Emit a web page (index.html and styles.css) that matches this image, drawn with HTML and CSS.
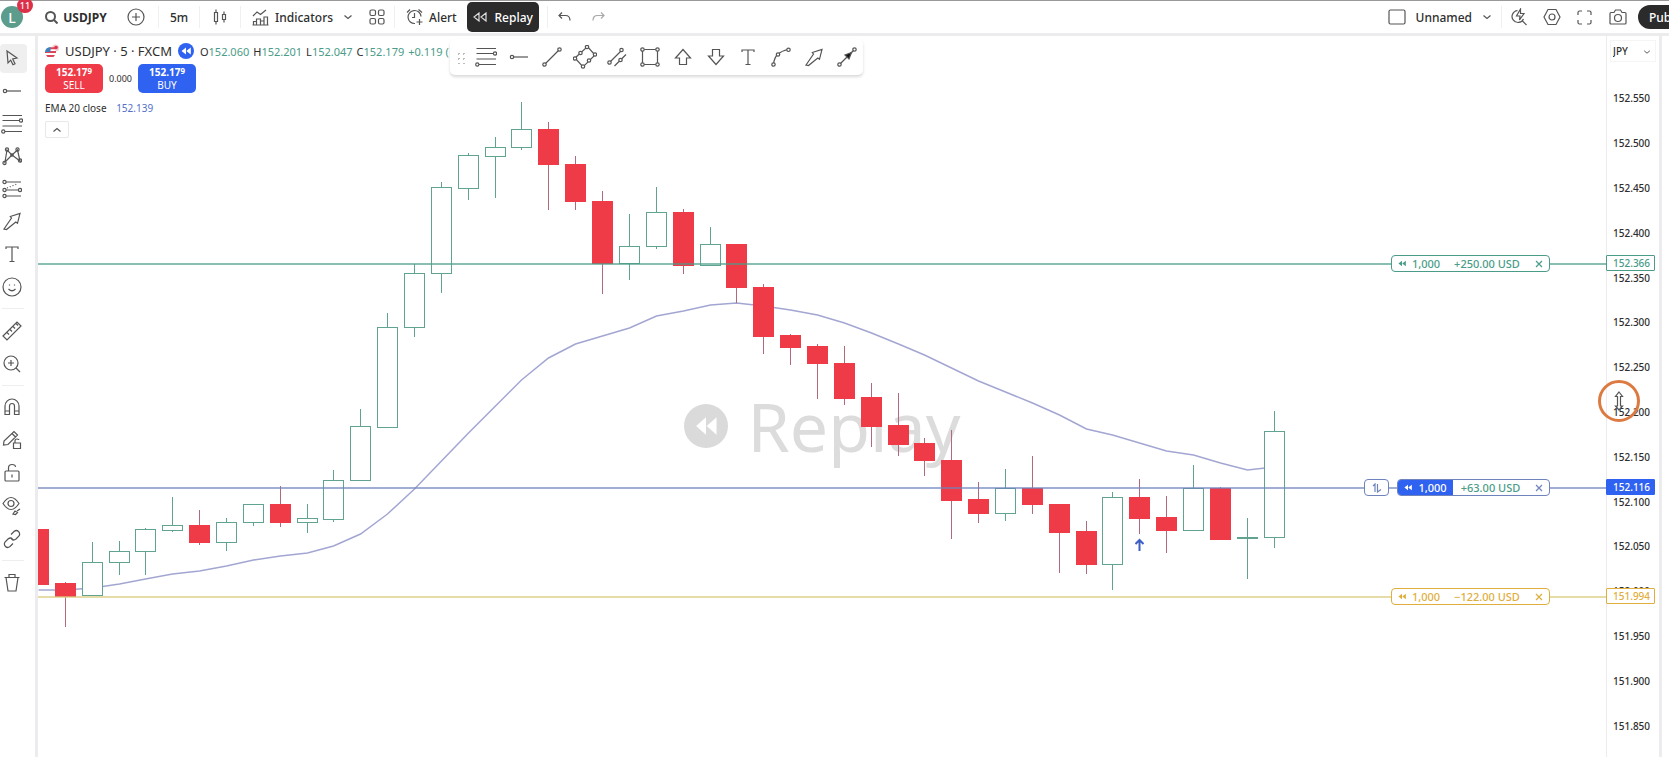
FILE: index.html
```
<!DOCTYPE html>
<html lang="en">
<head>
  <meta charset="UTF-8" />
  <meta name="viewport" content="width=device-width, initial-scale=1.0"/>
  <title>USDJPY 152.179</title>
  <link rel="stylesheet" href="styles.css">
</head>
<body>
  <!-- shared icons -->
  <svg class="defs" aria-hidden="true">
    <symbol id="i-hline" viewBox="0 0 20 20"><circle cx="3" cy="10" r="1.7"/><path d="M5 10h14"/></symbol>
    <symbol id="i-fib" viewBox="0 0 22 20"><path d="M1.500 1.500H21M1.500 6.500H18.500M1.500 12H21M4 17.500H21"/><circle cx="20" cy="6.500" r="1.600"/><circle cx="2.300" cy="17.500" r="1.600"/></symbol>
    <symbol id="i-text" viewBox="0 0 20 20"><path d="M4 5V3h12v2M10 3v14.500M7.500 17.500h5"/></symbol>
    <symbol id="i-arrow" viewBox="0 0 20 20"><path d="M2 18l7.500-11-1.200-1.500L18 2.500l-2.500 9.800-1.700-1.300L4.500 18.500z"/></symbol>
    <symbol id="i-chev" viewBox="0 0 10 10"><path d="M1.500 3.500L5 6.500l3.500-3"/></symbol>
    <symbol id="i-rew" viewBox="0 0 10 8"><path d="M5 .5v7L.5 4zM9.800 .5v7L5.300 4z"/></symbol>
    <symbol id="i-x" viewBox="0 0 8 8"><path d="M1 1l6 6M7 1L1 7"/></symbol>
  </svg>

  <header class="topbar">
    <button class="avatar" aria-label="Account">L<span class="badge">11</span></button>
    <button class="symbol-btn"><svg width="13" height="13" viewBox="0 0 13 13" class="thick"><circle cx="5.500" cy="5.500" r="4.500"/><path d="M9 9l3.500 3.500"/></svg>USDJPY</button>
    <button class="w44" aria-label="Compare"><svg width="18" height="18" viewBox="0 0 18 18"><circle cx="9" cy="9" r="8"/><path d="M9 5v8M5 9h8"/></svg></button>
    <i class="sep"></i>
    <button class="w40">5m</button>
    <i class="sep"></i>
    <button class="w40" aria-label="Chart type"><svg width="14" height="18" viewBox="0 0 14 18"><path d="M1.500 4.500h3v9h-3zM3 1.500v3M3 13.500v3M9.500 6.500h3v5h-3zM11 3.500v3M11 11.500v3"/></svg></button>
    <i class="sep"></i>
    <button class="labelled"><svg width="17" height="17" viewBox="0 0 17 17"><path d="M1 7l4-4 3.500 2.500L14 1M1.500 16v-3.500h3V16M4.500 16v-6h4v6M8.500 16v-4h3.500v4M12 16V8h3.500v8M.5 16h16"/></svg>Indicators</button>
    <button class="w24" aria-label="Favorite indicators"><svg width="10" height="10"><use href="#i-chev"/></svg></button>
    <button class="w34" aria-label="Templates"><svg width="16" height="16" viewBox="0 0 16 16"><rect x="1" y="1" width="5.500" height="5.500" rx="1.500"/><rect x="9.500" y="1" width="5.500" height="5.500" rx="1.500"/><rect x="1" y="9.500" width="5.500" height="5.500" rx="1.500"/><rect x="9.500" y="9.500" width="5.500" height="5.500" rx="1.500"/></svg></button>
    <i class="sep"></i>
    <button class="labelled"><svg width="17" height="18" viewBox="0 0 17 18"><path d="M15 8.500A6.500 6.500 0 1 0 9 15.500M8.500 5v4.500H6M1 4.500L4 1.500M12.500 1.500l3.500 3M13.500 11v6M10.500 14h6"/></svg>Alert</button>
    <button class="replay"><svg width="14" height="10" viewBox="0 0 14 10"><path d="M6 1v8L1 5zM13 1v8L8 5z"/></svg>Replay</button>
    <i class="sep"></i>
    <button class="w34" aria-label="Undo"><svg width="13" height="10" viewBox="0 0 13 10"><path d="M4 .5L1 3.500l3 3M1 3.500h6.500q4.500 0 4.500 5"/></svg></button>
    <button class="w34 faded" aria-label="Redo"><svg width="13" height="10" viewBox="0 0 13 10"><path d="M9 .5l3 3-3 3M12 3.500H5.500q-4.500 0-4.500 5"/></svg></button>

    <div class="right-tools">
      <button class="layout-btn"><svg width="18" height="16" viewBox="0 0 18 16"><rect x="1" y="1" width="16" height="14" rx="1.500"/></svg>Unnamed<svg width="10" height="10"><use href="#i-chev"/></svg></button>
      <i class="sep"></i>
      <button class="w33" aria-label="Quick search"><svg width="18" height="18" viewBox="0 0 18 18"><path d="M7.500 2.500A6 6 0 1 0 13.500 11M12 12.500l4.500 4.500M10.500 1L6.500 8H10l-.5 4L14 5.500h-3.500z"/></svg></button>
      <button class="w33" aria-label="Settings"><svg width="18" height="18" viewBox="0 0 18 18"><path d="M5 1.500h8L17 9l-4 7.500H5L1 9z"/><circle cx="9" cy="9" r="3"/></svg></button>
      <button class="w33" aria-label="Fullscreen"><svg width="15" height="15" viewBox="0 0 15 15"><path d="M1 5V2.500Q1 1 2.500 1H5M10 1h2.500Q14 1 14 2.500V5M14 10v2.500q0 1.500-1.500 1.500H10M5 14H2.500Q1 14 1 12.500V10"/></svg></button>
      <button class="w33" aria-label="Snapshot"><svg width="18" height="16" viewBox="0 0 18 16"><path d="M1 4.500Q1 3.500 2 3.500h3L6.500 1h5L13 3.500h3q1 0 1 1V14q0 1-1 1H2q-1 0-1-1z"/><circle cx="9" cy="9" r="3.500"/></svg></button>
      <button class="publish">Publish</button>
    </div>
  </header>

  <main class="workspace">
    <nav class="drawbar" aria-label="Drawing tools">
      <div class="tools eight">
        <button class="active" aria-label="Cursor"><svg width="20" height="20" viewBox="0 0 20 20"><path d="M5 3l10 7-4.300 1L13 15.800l-2 1-2.300-4.600L6 15z"/></svg></button>
        <button aria-label="Horizontal ray"><svg width="20" height="20"><use href="#i-hline"/></svg></button>
        <button aria-label="Fib retracement"><svg width="22" height="20"><use href="#i-fib"/></svg></button>
        <button aria-label="Pattern"><svg width="20" height="20" viewBox="0 0 20 20"><path d="M3 16L5 4l5 5 5.500-5L18 15l-8-6zM3 16l7-7"/><circle cx="5" cy="3.500" r="1.600"/><circle cx="15.500" cy="3.500" r="1.600"/><circle cx="2.500" cy="17" r="1.600"/><circle cx="18" cy="14.500" r="1.600"/><circle cx="10" cy="9" r="1.200"/></svg></button>
        <button aria-label="Position"><svg width="20" height="20" viewBox="0 0 20 20"><path d="M4 3h15M4 11h12.500M4 17h15"/><path class="dots" d="M5 9l11-4.500"/><circle cx="2.500" cy="3" r="1.600"/><circle cx="2.500" cy="11" r="1.600"/><circle cx="18" cy="11" r="1.600"/><circle cx="2.500" cy="17" r="1.600"/></svg></button>
        <button aria-label="Arrow"><svg width="20" height="20"><use href="#i-arrow"/></svg></button>
        <button aria-label="Text"><svg width="20" height="20"><use href="#i-text"/></svg></button>
        <button aria-label="Emoji"><svg width="20" height="20" viewBox="0 0 20 20"><circle cx="10" cy="10" r="9"/><path d="M7.500 7.500v1M12.500 7.500v1M6.500 12q3.500 3.500 7 0"/></svg></button>
      </div>
      <hr>
      <div class="tools two">
        <button aria-label="Measure"><svg width="20" height="20" viewBox="0 0 20 20"><path d="M1 15L15 1l4 4L5 19zM5 11.500L7 13.500M8 8.500l2 2M11 5.500l2 2M14 2.500l2 2"/></svg></button>
        <button aria-label="Zoom in"><svg width="20" height="20" viewBox="0 0 20 20"><circle cx="9" cy="9" r="7"/><path d="M14 14l4 4M9 6v6M6 9h6"/></svg></button>
      </div>
      <hr>
      <div class="tools five">
        <button aria-label="Magnet"><svg width="20" height="20" viewBox="0 0 20 20"><path d="M3 17.500V9a7 7 0 0 1 14 0v8.500h-4.500V9a2.500 2.500 0 0 0-5 0v8.500zM3 14h4.500M12.500 14H17"/></svg></button>
        <button aria-label="Keep drawing"><svg width="20" height="20" viewBox="0 0 20 20"><path d="M1.500 15l.5-4L12 1.500 15.500 5 6 14.500zM10 3.500l3.500 3.500M11.500 13h7v5.500h-7zM13 13v-2q0-2 2-2t2 1"/></svg></button>
        <button aria-label="Lock drawings"><svg width="20" height="20" viewBox="0 0 20 20"><rect x="3" y="8" width="14" height="10" rx="1"/><path d="M6.500 8V5q0-3.500 3.500-3.500t3.500 2.500M10 11.500v3"/></svg></button>
        <button aria-label="Hide drawings"><svg width="20" height="20" viewBox="0 0 20 20"><path d="M1 7.500q8-12 16 0-8 12-16 0zM11 18l2-3 2.500 1.500-2 2zM15 15l3-2"/><circle cx="9" cy="7.500" r="3"/></svg></button>
        <button aria-label="Link"><svg width="20" height="20" viewBox="0 0 20 20"><path d="M9 5.500L12 2.500q2.500-2 4.500 0t.5 4.500L14 10q-2.500 2-4.500 0M11 14.500l-3 3q-2.500 2-4.500 0t-.5-4.500L6 10q2.500-2 4.500 0"/></svg></button>
      </div>
      <hr>
      <div class="tools one">
        <button aria-label="Delete"><svg width="20" height="20" viewBox="0 0 20 20"><path d="M2.500 4.500h15M4 4.500L6 18h8l2-13.500M7 4.500v-3h6v3"/></svg></button>
      </div>
    </nav>

    <section class="pane">
      <div class="watermark"><span class="wm-icon"><svg width="22" height="20" viewBox="0 0 10 8" preserveAspectRatio="none"><use href="#i-rew"/></svg></span>Replay</div>
      <svg class="chart" id="chart"></svg>

      <div class="order tp">
        <div class="tag">
          <span class="qty"><svg width="8" height="7"><use href="#i-rew"/></svg>1,000</span>
          <span class="pnl">+250.00 USD</span>
          <button aria-label="Cancel"><svg width="8" height="8"><use href="#i-x"/></svg></button>
        </div>
      </div>
      <div class="order entry">
        <button class="reverse" aria-label="Reverse"><svg width="10" height="10" viewBox="0 0 10 10"><path d="M1 3l2-2v8M5.500 1v8L9 6.500"/></svg></button>
        <div class="tag">
          <span class="qty"><svg width="8" height="7"><use href="#i-rew"/></svg>1,000</span>
          <span class="pnl">+63.00 USD</span>
          <button aria-label="Close position"><svg width="8" height="8"><use href="#i-x"/></svg></button>
        </div>
      </div>
      <div class="order sl">
        <div class="tag">
          <span class="qty"><svg width="8" height="7"><use href="#i-rew"/></svg>1,000</span>
          <span class="pnl">−122.00 USD</span>
          <button aria-label="Cancel"><svg width="8" height="8"><use href="#i-x"/></svg></button>
        </div>
      </div>

      <div class="legend">
        <div class="title-row">
          <svg width="14" height="14" viewBox="0 0 14 14" class="flag"><circle cx="10.500" cy="4" r="3.500" fill="#f3c9cf"/><circle cx="11" cy="3.500" r="1.800" fill="#d9344c"/><circle cx="5.500" cy="8.500" r="5.500" fill="#fff"/><path d="M5 3.200h4.500l1 2H5zM5 7h6v2H0V8zM1 11h9l-1.500 2h-6z" fill="#dd4558"/><path d="M5.500 3v5H0q.3-4.500 5.500-5z" fill="#3f80bd"/></svg>
          <span class="pair">USDJPY · 5 · FXCM</span>
          <span class="rew-badge"><svg width="10" height="8"><use href="#i-rew"/></svg></span>
          <div class="ohlc">
            <span>O<b>152.060</b></span><span>H<b>152.201</b></span><span>L<b>152.047</b></span><span>C<b>152.179</b></span><b>+0.119 (</b>
          </div>
        </div>
        <div class="trade-row">
          <button class="sell"><strong>152.17<sup>9</sup></strong>SELL</button>
          <span class="spread">0.000</span>
          <button class="buy"><strong>152.17<sup>9</sup></strong>BUY</button>
        </div>
        <div class="ema-row">EMA 20 close <span>152.139</span></div>
        <button class="collapse" aria-label="Collapse legend"><svg width="10" height="10"><use href="#i-chev"/></svg></button>
      </div>

      <div class="favbar">
        <span class="grip"></span>
        <div class="fav-tools">
          <button aria-label="Fib retracement"><svg width="22" height="20"><use href="#i-fib"/></svg></button>
          <button aria-label="Horizontal ray"><svg width="20" height="20"><use href="#i-hline"/></svg></button>
          <button aria-label="Trend line"><svg width="20" height="20" viewBox="0 0 20 20"><path d="M3.500 16.500l13-13"/><circle cx="2.500" cy="17.500" r="1.700"/><circle cx="17.500" cy="2.500" r="1.700"/></svg></button>
          <button aria-label="Rotated rectangle"><svg width="24" height="24" viewBox="0 0 24 24"><path d="M2 13L14.500 1.500 22 10 10 22z"/><g class="knobs"><circle cx="2" cy="13.500" r="1.700"/><circle cx="14" cy="2" r="1.700"/><circle cx="22" cy="9.500" r="1.700"/><circle cx="10" cy="21.500" r="1.700"/><circle cx="7.500" cy="8" r="1.700"/><circle cx="16" cy="15.500" r="1.700"/></g></svg></button>
          <button aria-label="Parallel channel"><svg width="20" height="20" viewBox="0 0 20 20"><path d="M3 15L14 4M7.500 19L19 7.500"/><g class="knobs"><circle cx="2.500" cy="15.500" r="1.700"/><circle cx="14.500" cy="3" r="1.700"/><circle cx="13.500" cy="13" r="1.700"/></g></svg></button>
          <button aria-label="Rectangle"><svg width="20" height="20" viewBox="0 0 20 20"><path d="M2.500 2.500h15v15h-15z"/><g class="knobs"><circle cx="2.500" cy="2.500" r="1.700"/><circle cx="17.500" cy="2.500" r="1.700"/><circle cx="2.500" cy="17.500" r="1.700"/><circle cx="17.500" cy="17.500" r="1.700"/></g></svg></button>
          <button aria-label="Arrow up"><svg width="18" height="18" viewBox="0 0 18 18"><path d="M9 1.500L16.500 10H12.500v6.500h-7V10H1.500z"/></svg></button>
          <button aria-label="Arrow down"><svg width="18" height="18" viewBox="0 0 18 18"><path d="M9 16.500L1.500 8H5.500V1.500h7V8h4z"/></svg></button>
          <button aria-label="Text"><svg width="20" height="20"><use href="#i-text"/></svg></button>
          <button aria-label="Curve"><svg width="20" height="20" viewBox="0 0 20 20"><path d="M2.500 17Q3.500 10 7 7t10-4.500"/><g class="knobs"><circle cx="2.500" cy="17.500" r="1.700"/><circle cx="7" cy="7.500" r="1.700"/><circle cx="17.500" cy="2.800" r="1.700"/></g></svg></button>
          <button aria-label="Arrow marker"><svg width="20" height="20"><use href="#i-arrow"/></svg></button>
          <button aria-label="Arrow line"><svg width="20" height="20" viewBox="0 0 20 20"><path d="M3.500 16.500l13-13"/><path class="solid" d="M14.500 5.500l-2.500 6.500-4-4z"/><circle cx="2.500" cy="17.500" r="1.700"/><circle cx="17.500" cy="2.500" r="1.700"/></svg></button>
        </div>
      </div>
    </section>

    <aside class="axis">
      <select aria-label="Currency"><option>JPY</option></select>
      <svg class="select-chev" width="8" height="8"><use href="#i-chev"/></svg>
      <ol class="prices" id="prices"></ol>
      <span class="price-tag tp">152.366</span>
      <span class="price-tag entry">152.116</span>
      <span class="price-tag sl">151.994</span>
      <span class="pointer"><svg width="12" height="20" viewBox="0 0 12 20"><path d="M6 1l3.500 4.500h-2V15h2L6 19l-3.500-4h2V5.500h-2z"/></svg></span>
    </aside>
  </main>

  <script>
    // [high, body top, body bottom, low, up?]  y in window pixels
    const candles = [
      [530, 530, 585, 585, 0], [583, 584, 597, 628, 0], [543, 563, 596, 596, 1],
      [542, 552, 563, 576, 1], [529, 530, 552, 576, 1], [498, 526, 531, 533, 1],
      [511, 526, 543, 546, 0], [519, 523, 543, 552, 1], [505, 505, 523, 527, 1],
      [487, 505, 523, 528, 0], [505, 519, 523, 534, 1], [471, 481, 520, 523, 1],
      [410, 427, 481, 481, 1], [314, 328, 428, 429, 1], [265, 274, 328, 338, 1],
      [183, 188, 274, 294, 1], [154, 156, 189, 201, 1], [138, 148, 157, 199, 1],
      [103, 130, 148, 151, 1], [123, 130, 165, 211, 0], [157, 165, 202, 211, 0],
      [192, 202, 264, 295, 0], [215, 247, 264, 281, 1], [188, 213, 247, 250, 1],
      [210, 213, 266, 275, 0], [228, 245, 266, 267, 1], [245, 245, 288, 304, 0],
      [285, 288, 337, 355, 0], [335, 336, 348, 366, 0], [345, 347, 364, 400, 0],
      [347, 364, 399, 406, 0], [384, 398, 427, 448, 0], [394, 426, 445, 457, 0],
      [439, 444, 461, 477, 0], [431, 461, 501, 540, 0], [483, 500, 514, 524, 0],
      [470, 489, 514, 522, 1], [457, 489, 505, 515, 0], [505, 505, 533, 574, 0],
      [522, 532, 565, 575, 0], [493, 498, 565, 591, 1], [480, 498, 519, 535, 0],
      [497, 518, 531, 554, 0], [466, 489, 531, 531, 1], [488, 489, 540, 541, 0],
      [519, 538, 539, 580, 1], [412, 432, 538, 549, 1]
    ];
    const ema = [591, 591, 589, 585, 580, 575, 572, 567, 561, 557, 554, 547, 535, 515, 490, 462,
      434, 407, 381, 359, 345, 337, 329, 317, 312, 306, 304, 307, 311, 316, 324, 334, 345, 356,
      369, 382, 393, 404, 416, 430, 436, 444, 452, 456, 464, 471, 468];

    const TOP = 37, STEP = 26.86, W = 21;
    const cx = i => Math.round(i * STEP) + 0.5;

    let out = '<polyline class="ema" points="' + ema.map((v, i) => cx(i) + ',' + (v - TOP)).join(' ') + '"/>';
    candles.forEach(([h, t, b, l, up], i) => {
      const x = cx(i);
      out += `<g class="${up ? 'up' : 'down'}">` +
        `<path d="M${x} ${h - TOP}V${t - TOP}M${x} ${b - TOP}V${l - TOP}"/>` +
        `<rect x="${x - W / 2 + 0.5}" y="${t - TOP + 0.5}" width="${W - 1}" height="${Math.max(b - t, 1)}"/></g>`;
    });
    // entry marker
    out += '<path class="marker" d="M1101.500 515v-11M1097.500 508l4-4 4 4"/>';
    document.getElementById('chart').innerHTML = out;

    let labels = '';
    for (let p = 152550; p >= 151850; p -= 50) labels += `<li>${(p / 1000).toFixed(3)}</li>`;
    document.getElementById('prices').innerHTML = labels;
  </script>
</body>
</html>
```
FILE: styles.css
```
:root {
  --ink: #2e2e2e;
  --line: #ececee;
  --red: #ef3a48;
  --blue: #2f62f0;
  --green: #4a9c88;
  --gold: #dfae3c;
}
* { box-sizing: border-box; }
body {
  margin: 0;
  height: 100vh;
  display: flex;
  flex-direction: column;
  overflow: hidden;
  background: #fff;
  color: var(--ink);
  font-family: "Noto Sans", "Open Sans", sans-serif;
  font-size: 12px;
}
button {
  display: flex;
  align-items: center;
  justify-content: center;
  flex-shrink: 0;
  padding: 0;
  border: none;
  background: none;
  color: inherit;
  font: inherit;
  cursor: pointer;
}
svg {
  flex-shrink: 0;
  fill: none;
  stroke: #555;
  stroke-width: 1.2;
}
.defs { position: absolute; width: 0; height: 0; }
.thick { stroke-width: 2; }
.knobs { fill: #fff; }
.solid { fill: #111; }
.dots { stroke-dasharray: 1 2; }

/* top bar */
.topbar {
  display: flex;
  align-items: center;
  height: 36px;
  flex-shrink: 0;
  border-top: 1px solid #999;
  border-bottom: 3px solid var(--line);
  font-weight: 500;
}
.topbar button { height: 30px; }
.sep { width: 1px; height: 22px; background: #f0f0f0; flex-shrink: 0; }
.topbar .avatar {
  position: relative;
  width: 22px;
  height: 22px;
  margin: 0 15px 0 1px;
  border-radius: 50%;
  background: #5b9c8c;
  color: #fff;
  font-size: 14px;
}
.badge {
  position: absolute;
  top: -8px;
  right: -10px;
  width: 16px;
  height: 15px;
  border-radius: 8px;
  background: #dc3049;
  font-size: 9px;
  line-height: 15px;
  text-align: center;
}
.symbol-btn { gap: 5px; width: 76px; font-weight: 700; }
.w24 { width: 24px; }
.w33 { width: 33px; }
.w34 { width: 34px; }
.w40 { width: 40px; }
.w44 { width: 44px; }
.labelled { gap: 6px; padding: 0 3px 0 11px; }
.faded { opacity: 0.5; }
.topbar .replay {
  gap: 8px;
  width: 72px;
  margin: 0 8px 0 7px;
  border-radius: 5px;
  background: #2b2b2b;
  color: #fff;
}
.replay svg { stroke: #ddd; }
.right-tools {
  display: flex;
  align-items: center;
  margin-left: auto;
  margin-right: -33px;
}
.layout-btn { gap: 10px; margin-right: 9px; }
.topbar .publish {
  width: 64px;
  height: 24px;
  margin-left: 4px;
  border-radius: 12px;
  background: #2b2b2b;
  color: #fff;
}

/* left drawing bar */
.workspace { display: flex; flex: 1; min-height: 0; }
.drawbar {
  width: 38px;
  flex-shrink: 0;
  padding-top: 6px;
  border-right: 3px solid var(--line);
}
.tools { display: grid; grid-auto-rows: 1fr; width: 27px; }
.tools button { padding-right: 4px; }
.eight { height: 261px; }
.two { height: 66px; }
.five { height: 164px; }
.one { height: 33px; }
.tools .active { margin: 2px 0; border-radius: 4px; background: #efefef; }
.drawbar hr { width: 22px; height: 1px; margin: 5px 2px; border: none; background: #eee; }

/* chart */
.pane { position: relative; flex: 1; min-width: 0; overflow: hidden; }
.chart { position: absolute; left: 0; top: 0; width: 100%; height: 100%; stroke-width: 1; }
.ema { stroke: #a3a6d2; stroke-width: 1.5; }
.up { stroke: #5fa390; fill: #fff; }
.down { stroke: var(--red); fill: var(--red); }
.down path { stroke: #b06a7c; }
.marker { stroke: #3d5fc4; stroke-width: 2; }
.watermark {
  position: absolute;
  inset: 58px 0 0;
  display: flex;
  align-items: center;
  justify-content: center;
  gap: 20px;
  color: #dcdcdc;
  font-size: 68px;
}
.wm-icon {
  display: flex;
  align-items: center;
  justify-content: center;
  width: 44px;
  height: 44px;
  border-radius: 50%;
  background: #dadada;
}
.wm-icon svg { fill: #fff; stroke: none; }

/* orders */
.order {
  position: absolute;
  left: 0;
  right: 0;
  height: 17px;
  display: flex;
  justify-content: flex-end;
  gap: 8px;
  padding-right: 56px;
  color: var(--c);
  font-size: 11px;
  font-weight: 500;
}
.order::before {
  content: "";
  position: absolute;
  left: 0;
  right: 0;
  top: 8px;
  height: 2px;
  background: var(--c);
  opacity: 0.65;
}
.tp { --c: var(--green); top: 219px; }
.entry { --c: #6f83bd; top: 443px; }
.sl { --c: var(--gold); top: 552px; }
.order.sl::before { background: #d9c978; }
.tag, .reverse {
  position: relative;
  border: 1px solid var(--c);
  border-radius: 4px;
  background: #fff;
}
.reverse { width: 25px; }
.order svg { stroke: var(--c); }
.tag { display: flex; overflow: hidden; }
.qty, .pnl { display: flex; align-items: center; justify-content: center; line-height: 15px; }
.qty { gap: 6px; width: 54px; }
.pnl { width: 82px; }
.order .qty svg { fill: var(--c); stroke: none; }
.tag button { width: 21px; }
.entry .qty { width: 55px; background: var(--blue); color: #fff; }
.entry .qty svg { fill: #fff; }
.entry .pnl { width: 75px; color: var(--green); }
.order.entry .qty svg { fill: #fff; }

/* legend */
.legend { position: absolute; left: 7px; top: 4px; }
.title-row { display: flex; align-items: center; height: 22px; gap: 6px; }
.flag { stroke: none; }
.pair { font-size: 13px; white-space: nowrap; }
.rew-badge {
  display: flex;
  align-items: center;
  justify-content: center;
  width: 16px;
  height: 16px;
  border-radius: 50%;
  background: var(--blue);
}
.rew-badge svg { fill: #fff; stroke: none; }
.ohlc { display: flex; gap: 4px; font-size: 11px; white-space: nowrap; }
.ohlc b { color: var(--green); font-weight: 400; }
.trade-row { display: flex; align-items: center; gap: 6px; margin-top: 2px; }
.sell, .buy {
  flex-direction: column;
  width: 58px;
  height: 29px;
  border-radius: 5px;
  color: #fff;
  font-size: 10px;
  line-height: 13px;
}
.sell { background: var(--red); }
.buy { background: var(--blue); }
.sell strong, .buy strong { font-weight: 700; }
sup { font-size: 8px; line-height: 1; vertical-align: 2px; }
.spread { font-size: 9px; }
.ema-row { margin-top: 7px; font-size: 10px; line-height: 16px; }
.ema-row span { margin-left: 7px; color: #5470c8; }
.collapse {
  width: 24px;
  height: 17px;
  margin-top: 5px;
  border: 1px solid #e8e8e8;
  border-radius: 2px;
}
.collapse svg { transform: rotate(180deg); }

/* favourites toolbar */
.favbar {
  position: absolute;
  left: 412px;
  top: 3px;
  display: flex;
  align-items: center;
  width: 413px;
  height: 36px;
  padding-left: 6px;
  border-radius: 5px;
  background: #fff;
  box-shadow: 0 2px 3px rgba(0, 0, 0, 0.15);
}
.grip {
  width: 10px;
  height: 13px;
  margin-right: 4px;
  background: radial-gradient(circle, #bbb 1px, transparent 1px) 0 0 / 5px 5px;
}
.fav-tools { flex: 1; display: grid; grid-auto-flow: column; grid-auto-columns: 1fr; }

/* price axis */
.axis {
  position: relative;
  width: 56px;
  flex-shrink: 0;
  margin-right: 7px;
  border-left: 1px solid var(--line);
  border-right: 3px solid var(--line);
  font-size: 10px;
  font-weight: 500;
}
.axis select {
  display: block;
  width: 46px;
  height: 22px;
  margin: 4px 2px 14px 3px;
  padding: 0 2px;
  border: 1px solid #f5f5f5;
  appearance: none;
  background: #fff;
  color: var(--ink);
  font: inherit;
}
.select-chev { position: absolute; right: 8px; top: 12px; }
.prices {
  display: grid;
  grid-auto-rows: 1fr;
  align-items: center;
  height: 672px;
  margin: 0;
  padding-left: 6px;
  list-style: none;
}
.price-tag {
  position: absolute;
  left: -1px;
  width: 49px;
  height: 16px;
  padding-left: 6px;
  border: 1px solid var(--c);
  border-radius: 1px;
  background: #fff;
  color: var(--c);
  line-height: 14px;
}
.price-tag.entry { border-color: var(--blue); background: var(--blue); color: #fff; }
.pointer {
  position: absolute;
  left: -9px;
  top: 344px;
  display: flex;
  align-items: center;
  justify-content: center;
  width: 42px;
  height: 42px;
  border: 3px solid #dc7a42;
  border-radius: 50%;
}
.pointer svg { fill: #fff; }
```
